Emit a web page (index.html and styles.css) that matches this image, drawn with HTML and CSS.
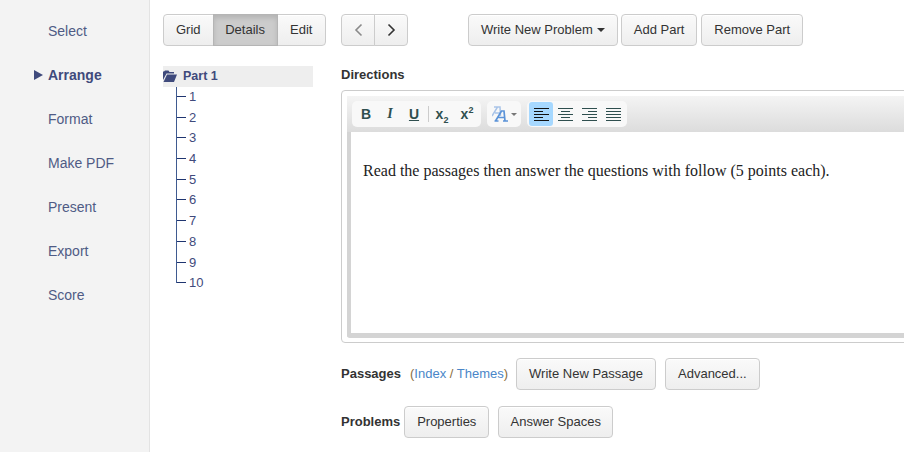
FILE: index.html
```html
<!DOCTYPE html>
<html lang="en">
<head>
<meta charset="utf-8">
<title>Arrange</title>
<link rel="stylesheet" href="styles.css">
</head>
<body>
<div class="app">
  <nav class="side">
    <a class="side-item">Select</a>
    <a class="side-item active">Arrange</a>
    <a class="side-item">Format</a>
    <a class="side-item">Make PDF</a>
    <a class="side-item">Present</a>
    <a class="side-item">Export</a>
    <a class="side-item">Score</a>
  </nav>
  <main class="main">
    <div class="topbar">
      <div class="group views">
        <button class="btn">Grid</button>
        <button class="btn on">Details</button>
        <button class="btn">Edit</button>
      </div>
      <div class="group pager">
        <button class="btn sq"><svg width="9" height="14" viewBox="0 0 9 14"><path d="M7.500 1.500 2 7l5.500 5.500" fill="none" stroke="#8a8a8a" stroke-width="1.600"/></svg></button>
        <button class="btn sq"><svg width="9" height="14" viewBox="0 0 9 14"><path d="M1.500 1.500 7 7l-5.500 5.500" fill="none" stroke="#333" stroke-width="1.600"/></svg></button>
      </div>
      <div class="actions">
        <button class="btn">Write New Problem<span class="caret"></span></button>
        <button class="btn">Add Part</button>
        <button class="btn">Remove Part</button>
      </div>
    </div>
    <div class="body">
      <div class="tree">
        <div class="tree-head">
          <svg width="14" height="12" viewBox="0 0 14 12"><path d="M0 10V1.500h1L2 .5h3.500l1 1.500H11v1.500H3.500L0 10Z" fill="#3f4a7c"/><path d="M4 4.500H14L11 12H0.500Z" fill="#3f4a7c"/></svg>
          <span>Part 1</span>
        </div>
        <ul class="tree-list">
          <li>1</li><li>2</li><li>3</li><li>4</li><li>5</li><li>6</li><li>7</li><li>8</li><li>9</li><li>10</li>
        </ul>
      </div>
      <div class="content">
        <div class="label dir">Directions</div>
        <div class="frame">
          <div class="editor">
            <div class="rte-bar">
              <div class="rte-group">
                <span class="tool b">B</span><span class="tool i">I</span><span class="tool u">U</span><span class="sep"></span><span class="tool s">x<sub>2</sub></span><span class="tool s">x<sup>2</sup></span>
              </div>
              <div class="rte-group">
                <span class="tool font"><svg width="18" height="16" viewBox="0 0 18 16"><path d="M0 10 5.500 1H8l.5 9M3 7h5.500M2 1h4" fill="none" stroke="#a9c4e8" stroke-width="1.500"/><path d="M3.500 15 9.500 5h2.500l1 10M6.500 11.500h6.500M2.500 15h4M11 15h5" fill="none" stroke="#5b93d8" stroke-width="1.700"/></svg><span class="mini-caret"></span></span>
              </div>
              <div class="rte-group">
                <span class="tool align on"><svg width="15" height="13" viewBox="0 0 15 13"><path d="M0 .5h15M0 3.500h9M0 6.500h15M0 9.500h9M0 12.500h15" stroke="#111"/></svg></span>
                <span class="tool align"><svg width="15" height="13" viewBox="0 0 15 13"><path d="M0 .5h15M3 3.500h9M0 6.500h15M3 9.500h9M0 12.500h15" stroke="#2f4f4f"/></svg></span>
                <span class="tool align"><svg width="15" height="13" viewBox="0 0 15 13"><path d="M0 .5h15M6 3.500h9M0 6.500h15M6 9.500h9M0 12.500h15" stroke="#2f4f4f"/></svg></span>
                <span class="tool align"><svg width="15" height="13" viewBox="0 0 15 13"><path d="M0 .5h15M0 3.500h15M0 6.500h15M0 9.500h15M0 12.500h15" stroke="#2f4f4f"/></svg></span>
              </div>
            </div>
            <div class="rte-text">Read the passages then answer the questions with follow (5 points each).</div>
          </div>
        </div>
        <div class="row passages">
          <span class="label">Passages</span>
          <span class="links">(<a>Index</a> / <a>Themes</a>)</span>
          <button class="btn">Write New Passage</button>
          <button class="btn">Advanced...</button>
        </div>
        <div class="row problems">
          <span class="label">Problems</span>
          <button class="btn props">Properties</button>
          <button class="btn spaces">Answer Spaces</button>
        </div>
      </div>
    </div>
  </main>
</div>
</body>
</html>
```
FILE: styles.css
```css
* { box-sizing: border-box; }
html, body { margin: 0; height: 100%; overflow: hidden; background: #fff; }
body { font: 13px/20px "Liberation Sans", Arial, sans-serif; color: #333; }
.app { display: flex; width: 904px; height: 452px; overflow: hidden; }

.side { flex: 0 0 150px; background: #f3f3f3; border-right: 1px solid #e3e3e3; padding-top: 9px; font-size: 14px; }
.side-item { display: block; position: relative; height: 44px; line-height: 44px; padding-left: 48px; color: #4f5b85; }
.side-item.active { font-weight: bold; color: #3f4a7c; }
.side-item.active::before { content: ""; position: absolute; left: 34px; top: 17px; border-left: 9px solid #3f4a7c; border-top: 5px solid transparent; border-bottom: 5px solid transparent; }

.main { flex: 1 1 auto; min-width: 0; padding: 14px 0 0 13px; }
.topbar { display: flex; height: 32px; }
.btn { display: inline-flex; align-items: center; justify-content: center; height: 32px; padding: 0 12px; margin: 0; font: inherit; color: #333; border: 1px solid #ccc; border-radius: 4px; background: linear-gradient(#fafafa, #eee); box-shadow: inset 0 1px 0 #fff; }
.group { display: flex; }
.group .btn { border-radius: 0; margin-left: -1px; }
.group .btn:first-child { border-radius: 4px 0 0 4px; margin-left: 0; }
.group .btn:last-child { border-radius: 0 4px 4px 0; }
.group .btn.on { background: #ccc; border-color: #b5b5b5; box-shadow: inset 0 3px 5px rgba(0,0,0,.12); position: relative; z-index: 1; }
.views .btn { width: 51px; }
.views .btn.on { width: 65px; }
.views .btn:last-child { width: 50px; }
.views { width: 163px; }
.pager { margin-left: 15px; }
.btn.sq { width: 34px; padding: 0; }
.actions { display: flex; gap: 3px; margin-left: 60px; }
.actions .btn:last-child { margin-left: 1px; }
.caret { display: inline-block; margin-left: 4px; border-top: 4px solid #333; border-left: 4px solid transparent; border-right: 4px solid transparent; }

.body { display: flex; margin-top: 20px; }
.tree { flex: 0 0 178px; color: #3f4a7c; }
.tree-head { display: flex; align-items: center; gap: 6px; width: 150px; height: 21px; padding-bottom: 2px; background: #eee; font-weight: bold; font-size: 12.500px; }
.tree-list { list-style: none; margin: 0 0 0 13px; padding: 0; }
.tree-list li { position: relative; height: 20.700px; line-height: 20px; padding-left: 12px; border-left: 1px solid #3f5a90; }
.tree-list li::before { content: ""; position: absolute; left: 0; top: 9px; width: 9px; height: 1px; background: #1f3570; }
.tree-list li:last-child { height: 10px; overflow: visible; white-space: nowrap; }

.content { flex: 1 1 auto; min-width: 0; }
.label { font-weight: bold; color: #333; line-height: 16px; }
.label.dir { padding-top: 1px; height: 16px; line-height: 15px; }
.frame { width: 600px; height: 253px; margin-top: 8px; padding: 5px; border: 1px solid #ccc; border-radius: 4px; }
.editor { height: 242px; border: 1px solid #d4d4d4; border-width: 0 4px 5px 4px; border-radius: 3px; background: #fff; }
.rte-bar { display: flex; gap: 6px; height: 36px; margin: 0 -4px; padding: 5px 0 0 5px; background: linear-gradient(#f4f4f4, #dcdcdc); }
.rte-group { display: flex; align-items: center; height: 26px; padding: 1px 2px; background: #f8f8f8; border-radius: 5px; }
.tool { display: inline-flex; align-items: center; justify-content: center; width: 24px; height: 24px; color: #2f4f4f; font-weight: bold; font-size: 14px; }
.tool.i { font-style: italic; font-family: "Liberation Serif", serif; }
.tool.u { text-decoration: underline; }
.tool.s { display: inline-block; text-align: center; line-height: 24px; font-size: 14px; margin-left: 1px; }
.tool.s sub, .tool.s sup { font-size: 9px; line-height: 0; }
.sep { width: 1px; height: 16px; margin-left: 2px; background: #ccc; }
.tool.font { width: 30px; gap: 1px; }
.mini-caret { border-top: 3px solid #777; border-left: 3px solid transparent; border-right: 3px solid transparent; }
.tool.on { background: #a6d8ff; border-radius: 3px; }
.rte-text { padding: 29px 0 0 12px; font: 16px/20px "Liberation Serif", "Times New Roman", serif; color: #222; }

.row { display: flex; align-items: center; height: 32px; }
.passages { margin-top: 15px; }
.problems { margin-top: 16px; }
.passages .btn { margin-left: 9px; }
.passages .btn:first-of-type { margin-left: 8px; }
.links { margin-left: 9px; color: #8a6d3b; }
.links a { color: #4a86c8; }
.btn.props { margin-left: 4px; width: 85px; padding: 0; }
.btn.spaces { margin-left: 9px; width: 115px; padding: 0; }
```
